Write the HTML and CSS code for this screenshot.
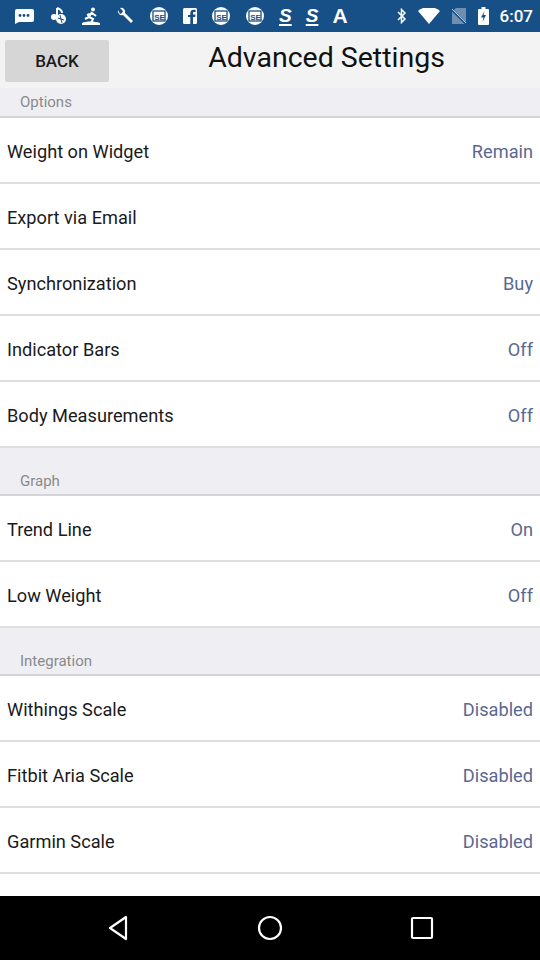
FILE: index.html
```html
<!DOCTYPE html>
<html>
<head>
<meta charset="utf-8">
<link rel="stylesheet" href="styles.css">
</head>
<body>
<div class="screen">
  <div class="statusbar">
    <div class="sb-left">
      <svg class="ic" width="22" height="16" viewBox="0 0 22 16"><path d="M3 1h16a2 2 0 0 1 2 2v9a2 2 0 0 1-2 2H6l-4 2V3a2 2 0 0 1 2-2z" fill="#fff"/><circle cx="7" cy="7.5" r="1.4" fill="#175087"/><circle cx="11" cy="7.5" r="1.4" fill="#175087"/><circle cx="15" cy="7.5" r="1.4" fill="#175087"/></svg>
      <svg class="ic" width="18" height="18" viewBox="0 0 18 18"><path d="M8 1v9" stroke="#fff" stroke-width="2"/><path d="M8 1c3 1 5 2 5 5" stroke="#fff" stroke-width="2" fill="none"/><circle cx="5" cy="10" r="3" fill="#fff"/><circle cx="12" cy="12" r="5" fill="#fff"/><path d="M9 11l6 2M11 8l2 8" stroke="#175087" stroke-width="1"/></svg>
      <svg class="ic" width="20" height="18" viewBox="0 0 20 18"><circle cx="12" cy="2.5" r="2" fill="#fff"/><path d="M11 5l-3 5 4 2-2 4M11 6l4 3M9 7l-3 1M8 10l-4 2" stroke="#fff" stroke-width="2" fill="none"/><path d="M1 16c4-2 12-2 18 0v2H1z" fill="#fff"/></svg>
      <svg class="ic" width="20" height="18" viewBox="0 0 20 18"><path d="M3 3a4 4 0 0 0 5 5l8 8 2-2-8-8a4 4 0 0 0-5-5l3 3-1 2-2 1z" fill="#fff"/></svg>
      <svg class="ic" width="20" height="20" viewBox="0 0 20 20"><circle cx="10" cy="10" r="9" fill="#fff"/><rect x="4" y="5" width="12" height="10" fill="none" stroke="#175087" stroke-width="1.3"/><text x="5.2" y="13.5" font-size="8" font-family="Liberation Sans" font-weight="bold" fill="#175087">SE</text></svg>
      <svg class="ic" width="14" height="16" viewBox="0 0 14 16"><rect x="0" y="0" width="14" height="16" rx="1.5" fill="#fff"/><path d="M10 16V9h2.2l.3-2.5H10V5.2c0-.7.2-1.2 1.2-1.2h1.4V1.8c-.3 0-1-.1-2-.1-2 0-3.3 1.2-3.3 3.4v1.9H5V9h2.3v7z" fill="#175087"/></svg>
      <svg class="ic" width="20" height="20" viewBox="0 0 20 20"><circle cx="10" cy="10" r="9" fill="#fff"/><rect x="4" y="5" width="12" height="10" fill="none" stroke="#175087" stroke-width="1.3"/><text x="5.2" y="13.5" font-size="8" font-family="Liberation Sans" font-weight="bold" fill="#175087">SE</text></svg>
      <svg class="ic" width="20" height="20" viewBox="0 0 20 20"><circle cx="10" cy="10" r="9" fill="#fff"/><rect x="4" y="5" width="12" height="10" fill="none" stroke="#175087" stroke-width="1.3"/><text x="5.2" y="13.5" font-size="8" font-family="Liberation Sans" font-weight="bold" fill="#175087">SE</text></svg>
      <span class="glyph ss">S</span>
      <span class="glyph ss">S</span>
      <span class="glyph">A</span>
    </div>
    <div class="sb-right">
      <svg class="ic" width="10" height="16" viewBox="0 0 10 16"><path d="M1 4l7 7-3.5 3.5V1.5L8 5 1 12" stroke="#fff" stroke-width="1.5" fill="none"/></svg>
      <svg class="ic" width="22" height="16" viewBox="0 0 22 16"><path d="M0 3a17 17 0 0 1 22 0L11 16z" fill="#fff"/></svg>
      <svg class="ic" width="16" height="18" viewBox="0 0 16 18"><path d="M5 1h10v16H1V5z" fill="#6e8fb0"/><path d="M0 2l16 16" stroke="#175087" stroke-width="2"/><path d="M1 2l14 14" stroke="#b8c8d8" stroke-width="1"/></svg>
      <svg class="ic" width="11" height="18" viewBox="0 0 11 18"><rect x="3.5" y="0" width="4" height="2" fill="#fff"/><rect x="0" y="2" width="11" height="16" rx="1" fill="#fff"/><path d="M6.5 4L3 10.5h2.5L4.5 15 8 8H5.5z" fill="#175087"/></svg>
      <span class="time">6:07</span>
    </div>
  </div>

  <div class="header">
    <div class="back">BACK</div>
    <div class="title">Advanced Settings</div>
  </div>

  <div class="list">
    <div class="section first">Options</div>
    <div class="row"><span class="label">Weight on Widget</span><span class="value">Remain</span></div>
    <div class="row"><span class="label">Export via Email</span><span class="value"></span></div>
    <div class="row"><span class="label">Synchronization</span><span class="value">Buy</span></div>
    <div class="row"><span class="label">Indicator Bars</span><span class="value">Off</span></div>
    <div class="row"><span class="label">Body Measurements</span><span class="value">Off</span></div>
    <div class="section">Graph</div>
    <div class="row"><span class="label">Trend Line</span><span class="value">On</span></div>
    <div class="row"><span class="label">Low Weight</span><span class="value">Off</span></div>
    <div class="section">Integration</div>
    <div class="row"><span class="label">Withings Scale</span><span class="value">Disabled</span></div>
    <div class="row"><span class="label">Fitbit Aria Scale</span><span class="value">Disabled</span></div>
    <div class="row"><span class="label">Garmin Scale</span><span class="value">Disabled</span></div>
    <div class="row"></div>
  </div>

  <div class="navbar">
    <div class="nav-btn"><svg width="22" height="26" viewBox="0 0 22 26"><path d="M19 2L3 13l16 11z" fill="none" stroke="#fff" stroke-width="2.2" stroke-linejoin="round"/></svg></div>
    <div class="nav-btn"><svg width="26" height="26" viewBox="0 0 26 26"><circle cx="13" cy="13" r="11" fill="none" stroke="#fff" stroke-width="2.2"/></svg></div>
    <div class="nav-btn"><svg width="24" height="24" viewBox="0 0 24 24"><rect x="2" y="2" width="20" height="20" rx="1" fill="none" stroke="#fff" stroke-width="2.2"/></svg></div>
  </div>
</div>
</body>
</html>
```
FILE: styles.css
```css
* { box-sizing: border-box; }
html, body { margin: 0; padding: 0; }
body {
  font-family: Roboto, "Noto Sans", sans-serif;
  background: #fff;
}
.screen {
  width: 540px;
  height: 960px;
  display: flex;
  flex-direction: column;
  overflow: hidden;
}
.statusbar {
  height: 32px;
  flex: none;
  background: #175087;
  display: flex;
  align-items: center;
  justify-content: space-between;
  padding: 0 7px 0 13px;
  color: #fff;
}
.sb-left, .sb-right {
  display: flex;
  align-items: center;
  gap: 14px;
}
.sb-right { gap: 11px; }
.ic { display: block; }
.glyph {
  font-family: "Liberation Sans", Arial, sans-serif;
  font-weight: bold;
  font-size: 21px;
  line-height: 20px;
  color: #fff;
}
.ss {
  font-style: italic;
  text-decoration: underline;
  text-decoration-thickness: 2px;
  text-underline-offset: 2px;
  font-size: 19px;
}
.time {
  font-size: 17px;
  font-weight: 500;
}
.header {
  height: 56px;
  flex: none;
  background: #f3f3f3;
  display: flex;
  align-items: center;
  padding-left: 5px;
}
.back {
  width: 104px;
  height: 42px;
  background: #d6d6d6;
  border-radius: 2px;
  display: flex;
  align-items: center;
  justify-content: center;
  font-size: 17px;
  font-weight: 500;
  color: #1a1a1a;
  margin-top: 2px;
}
.title {
  flex: 1;
  text-align: center;
  font-size: 28.5px;
  color: #111;
  margin-top: -6px;
  padding-left: 4px;
}
.list {
  flex: 1;
  overflow: hidden;
}
.section {
  height: 48px;
  background: #efeff3;
  border-bottom: 2px solid #d4d4d8;
  color: #8a8a8a;
  font-size: 15px;
  line-height: 18px;
  padding: 24px 0 0 20px;
}
.section.first {
  height: 30px;
  padding-top: 5px;
}
.row {
  height: 66px;
  border-bottom: 2px solid #dedede;
  display: flex;
  align-items: center;
  justify-content: space-between;
  padding: 2px 7px 0;
}
.label {
  font-size: 18.2px;
  color: #1a1a1a;
}
.value {
  font-size: 18.2px;
  color: #5a6890;
}
.navbar {
  height: 64px;
  flex: none;
  background: #000;
  display: flex;
  align-items: center;
  justify-content: center;
  gap: 92px;
}
.nav-btn {
  width: 60px;
  display: flex;
  justify-content: center;
  align-items: center;
}
```
